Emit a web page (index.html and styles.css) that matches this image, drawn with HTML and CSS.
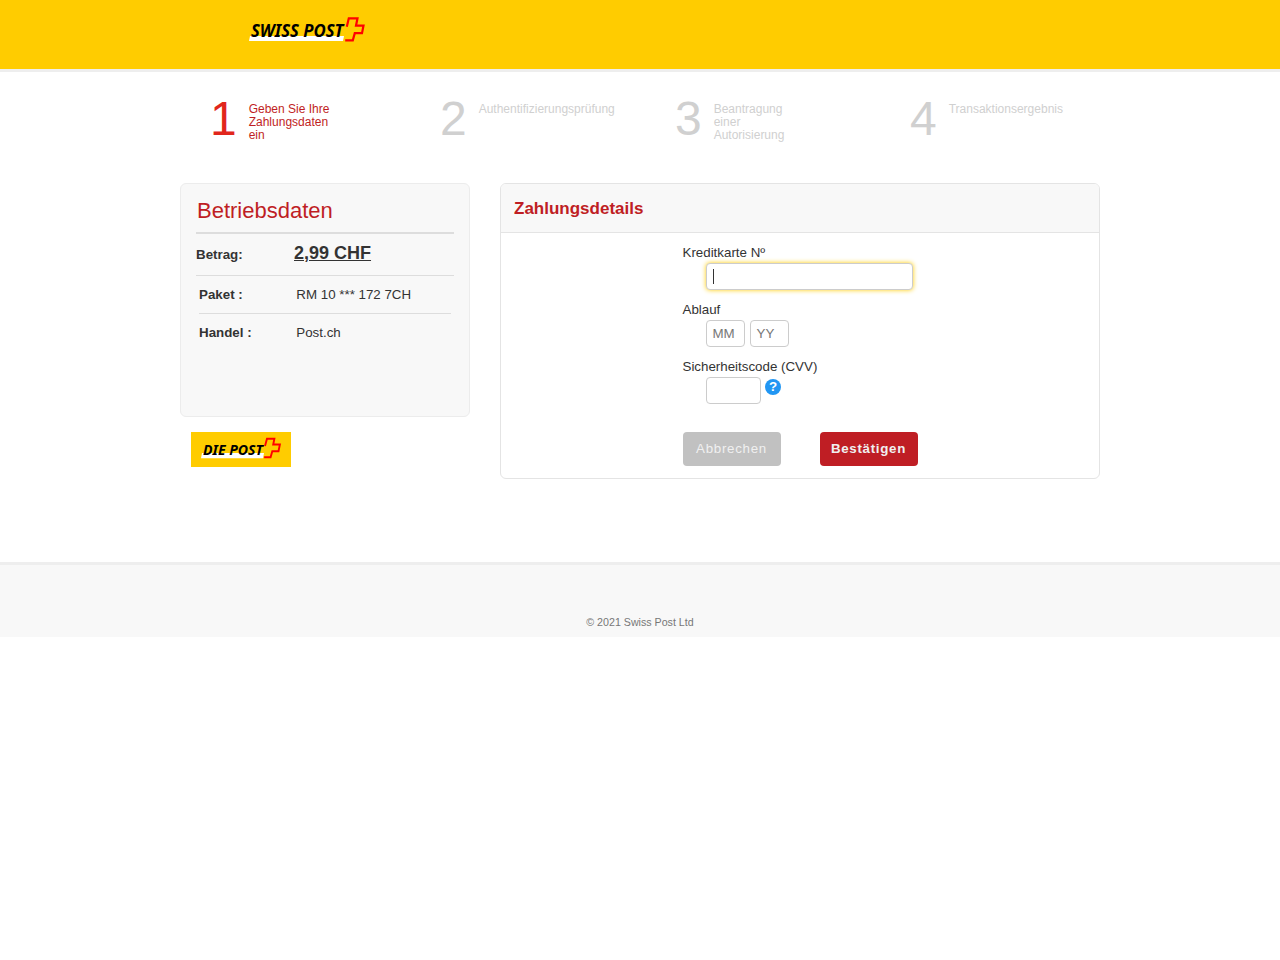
FILE: index.html
```html
<!DOCTYPE html>
<html lang="de">
<head>
<meta charset="utf-8">
<title>Zahlungsdetails – Layout-Mockup</title>
<link rel="stylesheet" href="styles.css">
</head>
<body>
<header class="top">
  <svg class="logo" width="140" height="50" viewBox="0 0 140 50" role="img">
    <path d="M10 28h94l-1 5H9z" fill="#fff"/>
    <text class="logo-text" x="11" y="29.3" font-size="17.2" textLength="92.5" lengthAdjust="spacingAndGlyphs">SWISS POST</text>
    <path d="M106.8 18.8l2-8.5h8.7l-1.5 7.4h7.5l-1.5 7.4h-7.2l-2 7.2h-7.6" fill="none" stroke="#f00" stroke-width="2.2"/>
  </svg>
</header>
<ol class="steps">
  <li class="step active"><span class="num">1</span><span class="label">Geben Sie Ihre Zahlungsdaten ein</span></li>
  <li class="step"><span class="num">2</span><span class="label">Authentifizierungsprüfung</span></li>
  <li class="step"><span class="num">3</span><span class="label">Beantragung einer Autorisierung</span></li>
  <li class="step"><span class="num">4</span><span class="label">Transaktionsergebnis</span></li>
</ol>
<main class="content">
  <aside class="side">
    <section class="merchant">
      <h1 class="merchant-title">Betriebsdaten</h1>
      <div class="amount-row"><b>Betrag:</b><span class="amount">2,99 CHF</span></div>
      <div class="data">
        <div class="row"><b>Paket :</b><span>RM 10 *** 172 7CH</span></div>
        <div class="row"><b>Handel :</b><span>Post.ch</span></div>
      </div>
    </section>
    <svg class="badge" width="100" height="35" viewBox="0 0 100 35" role="img">
      <path d="M0 0h100v35H0z" fill="#fc0"/>
      <path d="M11 21h62l-1 5.3H10z" fill="#fff"/>
      <text class="logo-text" x="12" y="22.8" font-size="14.8" textLength="60" lengthAdjust="spacingAndGlyphs">DIE POST</text>
      <path d="M74 14l2-7.3h7.4l-1.2 5.8h6.7l-1.4 6.8h-6.2l-1.7 6h-6.5" fill="none" stroke="#f00" stroke-width="1.9"/>
    </svg>
  </aside>
  <section class="payment">
    <h2 class="payment-title">Zahlungsdetails</h2>
    <div class="fields">
      <div class="label-text">Kreditkarte Nº</div>
      <div class="inputs"><span class="box card focused"><i class="caret"></i></span></div>
      <div class="label-text">Ablauf</div>
      <div class="inputs"><span class="box short">MM</span><span class="box short">YY</span></div>
      <div class="label-text">Sicherheitscode (CVV)</div>
      <div class="inputs"><span class="box cvv"></span><span class="help">?</span></div>
      <div class="actions"><span class="btn cancel">Abbrechen</span><span class="btn confirm">Bestätigen</span></div>
    </div>
  </section>
</main>
<footer class="footer">© 2021 Swiss Post Ltd</footer>
</body>
</html>
```
FILE: styles.css
```css
* { box-sizing: border-box; }
body {
  margin: 0;
  background: #fff;
  color: #333;
  font: 13.33px/16px "Liberation Sans", Arial, sans-serif;
}
.top {
  height: 72px;
  padding: 8px 0 0 240px;
  background: #fc0;
  border-bottom: 3px solid #eee;
}
.logo, .badge { display: block; }
.logo-text {
  font-family: "Noto Sans", "Open Sans", sans-serif;
  font-weight: 700;
  font-style: italic;
  fill: #000;
}
.steps {
  display: grid;
  grid-template-columns: 230px 235px 235px 190px;
  height: 111px;
  margin: 0;
  padding: 19px 0 0 210px;
  list-style: none;
  color: #d0d0d0;
}
.step { display: flex; gap: 11.7px; }
.num { width: 27px; font-size: 48px; line-height: 56px; }
.label { width: 90px; padding-top: 12px; font-size: 12px; line-height: 13px; }
.active .num { color: #e1261c; }
.active .label { color: #bf1e24; }
.content {
  display: flex;
  gap: 30px;
  width: 920px;
  height: 379px;
  margin: 0 auto;
  align-items: flex-start;
}
.side { width: 290px; }
.merchant {
  height: 234px;
  padding: 12px 15px;
  background: #f8f8f8;
  border: 1px solid #ececec;
  border-radius: 6px;
}
.merchant-title {
  height: 38px;
  margin: 0;
  padding-left: 1px;
  border-bottom: 2px solid #ddd;
  color: #bf1e24;
  font-size: 22px;
  font-weight: 400;
  line-height: 30px;
}
.amount-row {
  display: flex;
  align-items: baseline;
  height: 42px;
  padding-top: 8px;
  border-bottom: 1px solid #ddd;
}
.amount-row b { width: 98px; }
.amount {
  font-size: 18px;
  font-weight: 700;
  line-height: 22px;
  text-decoration: underline;
}
.data { padding: 0 3px; }
.row { display: flex; height: 38px; padding-top: 11px; }
.row b { width: 97.3px; }
.row:first-child { border-bottom: 1px solid #ddd; }
.badge { margin: 15px 0 0 11px; }
.payment {
  width: 600px;
  height: 296px;
  border: 1px solid #e4e4e4;
  border-radius: 6px;
  overflow: hidden;
}
.payment-title {
  height: 49px;
  margin: 0;
  padding-left: 13px;
  background: #f8f8f8;
  border-bottom: 1px solid #e4e4e4;
  color: #bf1e24;
  font-size: 17px;
  line-height: 49px;
}
.fields { padding: 12px 0 0 181.5px; }
.label-text { height: 18px; }
.inputs { display: flex; gap: 5px; height: 39px; padding-left: 23.5px; }
.box {
  display: flex;
  align-items: center;
  height: 27px;
  padding: 0 5.5px;
  background: #fff;
  border: 1px solid #ccc;
  border-radius: 4px;
  color: #777;
}
.card { width: 207px; padding-left: 6px; }
.focused { box-shadow: 0 0 5px #fc0; }
.caret { width: 1px; height: 15px; background: #333; }
.short { width: 39px; }
.cvv { width: 55px; }
.help {
  width: 16px;
  height: 16px;
  margin: 2px 0 0 -1px;
  border-radius: 50%;
  background: #2196f3;
  color: #fff;
  font-weight: 700;
  text-align: center;
}
.actions { display: flex; gap: 39px; padding-top: 16px; }
.btn {
  width: 98px;
  height: 34px;
  border-radius: 4px;
  color: #f0f0f0;
  letter-spacing: 0.7px;
  line-height: 34px;
  text-align: center;
}
.cancel { background: #c1c1c1; }
.confirm { background: #bf1e24; font-weight: 700; }
.footer {
  height: 75px;
  padding-top: 51px;
  background: #f8f8f8;
  border-top: 3px solid #eee;
  color: #777;
  font-size: 10.67px;
  line-height: 13px;
  text-align: center;
}
```
